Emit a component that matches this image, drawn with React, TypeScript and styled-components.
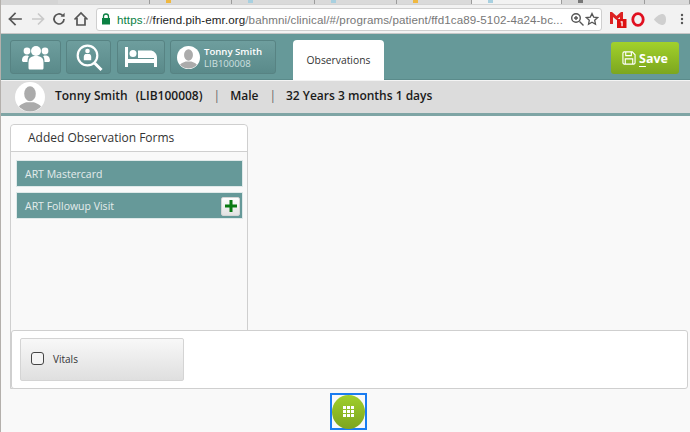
import React from "react";
import styled, { createGlobalStyle } from "styled-components";

const Global = createGlobalStyle`
  html, body { margin: 0; padding: 0; width: 690px; height: 432px; overflow: hidden; background: #f9f9f9; }
  * { box-sizing: border-box; }
  body { font-family: "Open Sans", "Liberation Sans", sans-serif; }
`;

const Page = styled.div`
  position: relative; width: 690px; height: 432px; display: flex; flex-direction: column; overflow: hidden;
  &::after { content: ""; position: absolute; left: 0; top: 0; bottom: 0; width: 1px; background: #b4b0ac; }
`;
const TabStrip = styled.div`
  height: 5px; background: #d4d4d4; display: flex; padding-left: 58px; flex: none;
`;
const ChromeTab = styled.div<{ $active?: boolean; $w: number }>`
  width: ${p => p.$w}px; height: 4px; flex: none; padding-left: 16px;
  background: ${p => (p.$active ? "#f2f2f2" : "#dadada")};
  border-right: 1px solid #9c9c9c;
`;
const Favicon = styled.div<{ $c: string }>`
  width: 5px; height: 3px; background: ${p => p.$c};
`;
const BrowserBar = styled.div`
  height: 29px; flex: none; background: #f2f2f2; display: flex; align-items: center; padding: 0 0 0 7px;
  border-bottom: 1px solid #c6c6c6;
`;
const NavIcon = styled.svg<{ $mr: number; $c?: string }>`
  width: 16px; height: 16px; flex: none; margin-right: ${p => p.$mr}px; fill: none; stroke: ${p => p.$c ?? "#555"}; stroke-width: 1.7;
`;
const Omnibox = styled.div`
  width: 506px; height: 23px; flex: none; background: #fff; border: 1px solid #cfcfcf; border-radius: 3px;
  display: flex; align-items: center; padding: 0 2px 0 4px; font: 11.6px "Liberation Sans", Arial, sans-serif; letter-spacing: 0.1px; color: #777; white-space: nowrap;
`;
const Secure = styled.span`color: #0b8043;`;
const Host = styled.span`color: #222;`;
const UrlText = styled.span`flex: 1; min-width: 0; margin-left: 6px; overflow: hidden;`;
const OmniIcon = styled.svg`flex: none;`;
const Exts = styled.div`display: flex; align-items: center; margin-left: 7px;`;
const ExtIcon = styled.svg<{ $ml?: number }>`flex: none; margin-left: ${p => p.$ml ?? 0}px;`;
const Header = styled.div`
  height: 46px; flex: none; background: #669999; display: flex; align-items: flex-start; padding: 6px 0 0 10px; border-bottom: 1px solid #5b8b8b; position: relative;
`;
const HeadButton = styled.div<{ $w: number; $ml?: number }>`
  width: ${p => p.$w}px; height: 34px; flex: none; margin-left: ${p => p.$ml ?? 0}px; border-radius: 3px; border: 1px solid #578383;
  background: linear-gradient(#6e9e9e, #5a8a8a); display: flex; align-items: center; justify-content: center;
`;
const PatientButton = styled(HeadButton)`justify-content: flex-start; padding-left: 6px; gap: 4px;`;
const PatientText = styled.div`display: flex; flex-direction: column; gap: 1px; color: #fff; font-size: 9.6px; line-height: 11px; font-weight: 600;`;
const PatientId = styled.span`color: #cfe0e0; font-weight: 400;`;
const Tab = styled.div`
  width: 91px; height: 40px; margin-left: 17px; flex: none; background: #fff; border-radius: 4px 4px 0 0;
  font-size: 10.3px; color: #333; display: flex; align-items: center; justify-content: center; padding-bottom: 1px;
`;
const SaveButton = styled.div`
  margin-left: auto; margin-right: 11px; margin-top: 2px; width: 68px; height: 32px; flex: none; border-radius: 3px;
  background: linear-gradient(#a2d12b, #7ca61f); color: #fff; font-size: 12.5px; font-weight: 700;
  display: flex; align-items: center; justify-content: center; gap: 3px;
`;
const SaveKey = styled.span`text-decoration: underline; text-underline-offset: 3px;`;
const PatientBar = styled.div`
  height: 36px; flex: none; background: #dcdcdc; border-top: 1px solid #f4f4f4; border-bottom: 3px solid #7fa5a5; display: flex; align-items: center;
  padding: 0 0 0 15px; font-size: 12px; font-weight: 600; color: #1a1a1a; white-space: nowrap;
`;
const PatientInfo = styled.div`display: flex; align-items: center; padding-bottom: 4px;`;
const Name = styled.span`margin-left: 10px;`;
const PatientIdent = styled.span`margin-left: 8px;`;
const Sep = styled.span`margin: 0 10px 0 11px; font-weight: 400; color: #666;`;
const Body = styled.div`flex: 1; padding: 9px 0 0 10px; display: flex; flex-direction: column; background: #f9f9f9;`;
const Panel = styled.div`
  width: 238px; height: 265px; flex: none; margin-top: -1px; border: 1px solid #cfcfcf; border-radius: 4px 4px 0 0; background: #f9f9f9;
`;
const PanelTitle = styled.div`
  height: 27px; border-bottom: 1px solid #cfcfcf; background: #fff; border-radius: 4px 4px 0 0; color: #333; font-size: 12px; line-height: 26px; padding-left: 17px;
`;
const FormList = styled.div`padding: 8px 4px 0 5px; display: flex; flex-direction: column; gap: 5px;`;
const FormItem = styled.div`
  height: 27px; background: #669999; border: 1px solid #dfe9e9; color: #e4ecec; font-size: 10.5px; font-weight: 400; padding: 0 2px 0 8px;
  display: flex; align-items: center; justify-content: space-between;
`;
const AddButton = styled.div`
  width: 19px; height: 19px; border-radius: 2px; background: linear-gradient(#fff, #e2e2e2); border: 1px solid #d5d5d5;
  display: flex; align-items: center; justify-content: center; margin-top: 1px;
`;
const Popup = styled.div`
  position: absolute; left: 11px; top: 330px; width: 677px; height: 59px; background: #fff; border: 1px solid #cfcfcf; border-radius: 3px;
  padding: 7px 8px;
`;
const VitalsButton = styled.div`
  width: 164px; height: 43px; border: 1px solid #d4d4d4; border-radius: 2px; background: linear-gradient(#f8f8f8, #dfdfdf);
  display: flex; align-items: center; padding: 0 0 2px 10px; gap: 9px; font-size: 10px; color: #333;
`;
const Check = styled.span`
  width: 13px; height: 13px; border: 1.5px solid #444; border-radius: 3px; background: #f4f4f4; flex: none;
`;
const FabWrap = styled.div`display: flex; justify-content: center; margin-top: 4px; padding-right: 4px;`;
const Fab = styled.div`
  width: 37px; height: 37px; border: 2px solid #1a7cf0; display: flex; align-items: center; justify-content: center; position: relative;
`;
const FabCircle = styled.div`
  width: 33px; height: 34px; border-radius: 50%; background: linear-gradient(#a0cf2b, #7da51f); display: grid; grid-template-columns: repeat(3, 3px); grid-auto-rows: 3px; gap: 1px; justify-content: center; align-content: center;
`;
const Dot = styled.i`background: #fff; display: block;`;
const AvatarSvg = styled.svg`flex: none;`;

const Avatar = ({ size }: { size: number }) => (
  <AvatarSvg width={size} height={size} viewBox="0 0 32 32">
    <defs><clipPath id={`av${size}`}><circle cx="16" cy="16" r="15.4" /></clipPath></defs>
    <circle cx="16" cy="16" r="16" fill="#fff" />
    <g clipPath={`url(#av${size})`} fill="#ababab">
      <ellipse cx="16" cy="12.5" rx="6.2" ry="8" />
      <path d="M2 32c0-7 6-9 10-10.500h8C24 23 30 25 30 32z" />
    </g>
  </AvatarSvg>
);

const tabs = [
  { w: 92 }, { w: 82, c: "#f0b840" }, { w: 83, c: "#a8d0e0" }, { w: 82, c: "#a8d0e0" },
  { w: 75, c: "#f0b840" }, { w: 90, c: "#a8d0e0", active: true }, { w: 83, c: "#777" }, { w: 45 },
];

export default function App() {
  return (
    <Page>
      <Global />
      <TabStrip>
        {tabs.map((t, i) => (
          <ChromeTab key={i} $w={t.w} $active={t.active}>{t.c && <Favicon $c={t.c} />}</ChromeTab>
        ))}
      </TabStrip>
      <BrowserBar>
        <NavIcon $mr={7} viewBox="0 0 16 16" strokeLinecap="square"><path d="M14 8H2.500M8 2.500 2.500 8 8 13.500" /></NavIcon>
        <NavIcon $mr={5} $c="#c9c9c9" viewBox="0 0 16 16"><path d="M2 8h11.500M8 2.500 13.500 8 8 13.500" /></NavIcon>
        <NavIcon $mr={6} viewBox="0 0 16 16"><path d="M13 8a5 5 0 1 1-1.500-3.600" /><path d="M13.600 1.800v4h-4" fill="#555" stroke="none" /></NavIcon>
        <NavIcon $mr={7} viewBox="0 0 16 16"><path d="M1.500 8.500 8 2l6.500 6.500M4 7v7h8V7" /></NavIcon>
        <Omnibox>
          <OmniIcon width="10" height="12" viewBox="0 0 10 12">
            <path d="M2.500 5V3.500a2.500 2.500 0 0 1 5 0V5" fill="none" stroke="#0b8043" strokeWidth="1.3" />
            <rect x="1" y="5" width="8" height="6.500" fill="#0b8043" />
          </OmniIcon>
          <UrlText><Secure>https</Secure>://<Host>friend.pih-emr.org</Host>/bahmni/clinical/#/programs/patient/ffd1ca89-5102-4a24-bc...</UrlText>
          <OmniIcon width="15" height="15" viewBox="0 0 15 15" fill="none" stroke="#555" strokeWidth="1.4">
            <circle cx="6" cy="6" r="4.300" /><path d="m9.500 9.500 4 4M4 6h4M6 4v4" />
          </OmniIcon>
          <OmniIcon width="14" height="14" viewBox="0 0 14 14" fill="none" stroke="#555" strokeWidth="1.3">
            <path d="m7 1.500 1.700 3.600 3.900.5-2.900 2.700.8 3.900L7 10.300l-3.500 1.900.8-3.900-2.900-2.700 3.900-.5z" />
          </OmniIcon>
        </Omnibox>
        <Exts>
          <ExtIcon width="18" height="20" viewBox="0 0 18 20">
            <path d="M1 3h2l4.500 4L12 3h2v12h-3V8l-3.500 3L4 8v7H1z" fill="#d22" />
            <rect x="8" y="10" width="9.500" height="9" fill="#d11" />
            <path d="M11.600 12.200h2.100v5h-1.300v-3.700h-.8z" fill="#fff" />
          </ExtIcon>
          <ExtIcon $ml={4} width="14" height="15" viewBox="0 0 14 15">
            <ellipse cx="7" cy="7.500" rx="5.200" ry="5.900" fill="none" stroke="#e01020" strokeWidth="2.800" />
          </ExtIcon>
          <ExtIcon $ml={8} width="14" height="13" viewBox="0 0 14 13">
            <path d="M1 6.500C2 5 6 1 9 1c3 0 4 2.500 4 5.500S12 12 9 12C6 12 2 8 1 6.500z" fill="#cfcfcf" />
          </ExtIcon>
          <ExtIcon $ml={13} width="4" height="12" viewBox="0 0 4 12" fill="#555">
            <circle cx="2" cy="2" r="1.200" /><circle cx="2" cy="6" r="1.200" /><circle cx="2" cy="10" r="1.200" />
          </ExtIcon>
        </Exts>
      </BrowserBar>
      <Header>
        <HeadButton $w={51}>
          <svg width="28" height="25" viewBox="0 0 28 25" fill="#fff">
            <circle cx="5" cy="6" r="3.400" /><circle cx="23" cy="6" r="3.400" /><circle cx="14" cy="6" r="5" />
            <path d="M0 16c0-4 1.500-5.500 5-5.500 1 0 1.500.3 2 .6-1 1.300-1.500 3-1.500 5.900H1zM28 16c0-4-1.500-5.500-5-5.500-1 0-1.500.3-2 .6 1 1.300 1.500 3 1.500 5.900H27z" />
            <path d="M6.500 18c0-5 2-7 7.500-7s7.500 2 7.500 7v5c0 1-.7 1.500-1.500 1.500H8c-.8 0-1.500-.5-1.500-1.500z" />
          </svg>
        </HeadButton>
        <HeadButton $w={45} $ml={5}>
          <svg width="28" height="31" viewBox="0 0 28 31" fill="none" stroke="#fff">
            <circle cx="12.500" cy="13.500" r="9.800" strokeWidth="2.200" />
            <path d="m19.500 21 7 7" strokeWidth="3" />
            <path d="M10.300 12c-1.300 1-1.500 2-1.500 3.200v3h7.400v-3c0-1.200-.2-2.200-1.500-3.200z" fill="#fff" stroke="none" />
            <circle cx="12.500" cy="9" r="2.300" fill="#fff" stroke="none" />
          </svg>
        </HeadButton>
        <HeadButton $w={48} $ml={6}>
          <svg width="32" height="22" viewBox="0 0 32 22" fill="#fff">
            <rect x="0" y="1" width="3" height="20" /><rect x="29" y="12" width="3" height="9" />
            <rect x="0" y="13" width="32" height="4" /><circle cx="8" cy="7.500" r="3.500" />
            <path d="M13 4.500h12c3.500 0 7 2.500 7 7.500H13z" />
          </svg>
        </HeadButton>
        <PatientButton $w={106} $ml={5}>
          <Avatar size={23} />
          <PatientText><span>Tonny Smith</span><PatientId>LIB100008</PatientId></PatientText>
        </PatientButton>
        <Tab>Observations</Tab>
        <SaveButton>
          <svg width="14" height="14" viewBox="0 0 15 15" fill="none" stroke="#fff" strokeWidth="1.200">
            <path d="M1 2.500A1.500 1.500 0 0 1 2.500 1H11l3 3v8.500a1.500 1.500 0 0 1-1.500 1.500h-10A1.500 1.500 0 0 1 1 12.500z" />
            <path d="M4 1v4h6V1M3.500 14V8.500h8V14" />
          </svg>
          <span><SaveKey>S</SaveKey>ave</span>
        </SaveButton>
      </Header>
      <PatientBar>
        <Avatar size={30} />
        <PatientInfo>
          <Name>Tonny Smith</Name>
          <PatientIdent>(LIB100008)</PatientIdent>
          <Sep>|</Sep>Male<Sep>|</Sep>32 Years 3 months 1 days
        </PatientInfo>
      </PatientBar>
      <Body>
        <Panel>
          <PanelTitle>Added Observation Forms</PanelTitle>
          <FormList>
            <FormItem>ART Mastercard</FormItem>
            <FormItem>ART Followup Visit
              <AddButton>
                <svg width="12" height="12" viewBox="0 0 12 12"><path d="M4.500 0h3v4.500H12v3H7.500V12h-3V7.500H0v-3h4.500z" fill="#0a7a12" /></svg>
              </AddButton>
            </FormItem>
          </FormList>
        </Panel>
        <FabWrap>
          <Fab>
            <FabCircle>{Array.from({ length: 9 }, (_, i) => <Dot key={i} />)}</FabCircle>
          </Fab>
        </FabWrap>
      </Body>
      <Popup>
        <VitalsButton><Check />Vitals</VitalsButton>
      </Popup>
    </Page>
  );
}
